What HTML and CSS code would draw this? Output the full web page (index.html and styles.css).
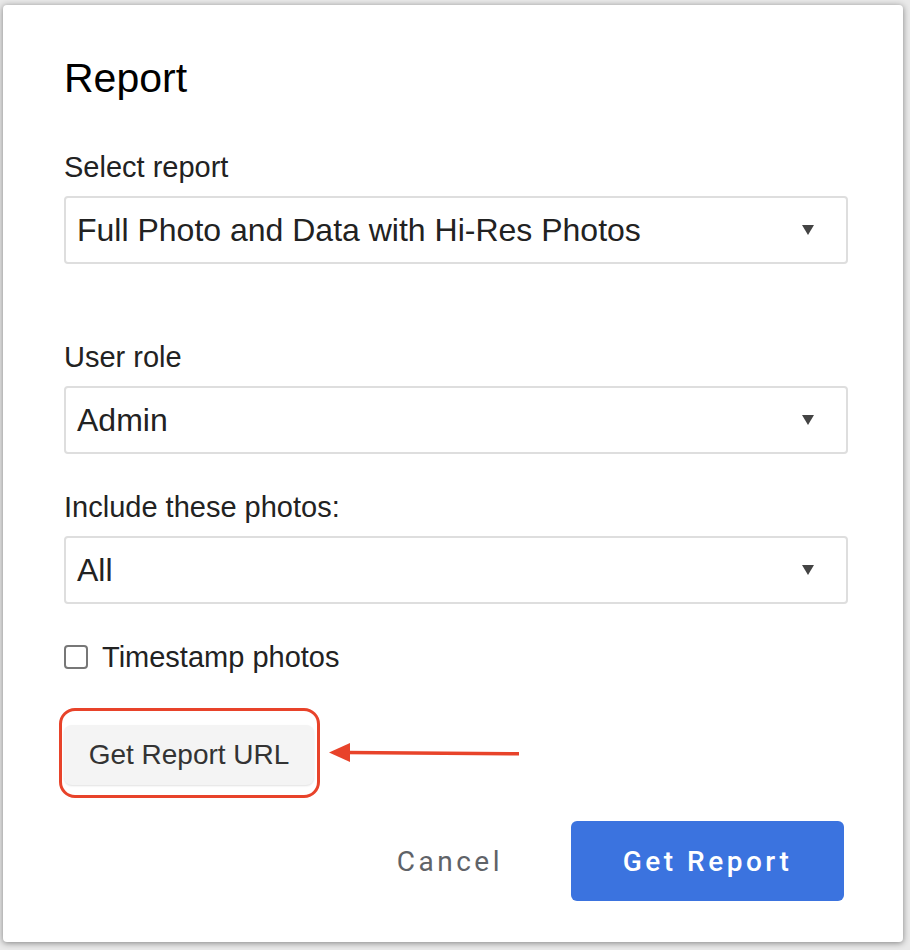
FILE: index.html
```
<!DOCTYPE html>
<html lang="en">
<head>
    <meta charset="UTF-8">
    <meta name="viewport" content="width=device-width, initial-scale=1.0">
    <link rel="stylesheet" href="styles.css">
    <title>Report</title>
</head>
<body>
    <div class="dialog">
        <h1 class="dialog-title">Report</h1>

        <div class="field field-report">
            <label class="field-label">Select report</label>
            <div class="select">
                <span class="select-value">Full Photo and Data with Hi-Res Photos</span>
                <svg class="select-arrow" width="12" height="10" viewBox="0 0 12 10"><path d="M0 0 L12 0 L6 10 Z" fill="#444"/></svg>
            </div>
        </div>

        <div class="field field-role">
            <label class="field-label">User role</label>
            <div class="select">
                <span class="select-value">Admin</span>
                <svg class="select-arrow" width="12" height="10" viewBox="0 0 12 10"><path d="M0 0 L12 0 L6 10 Z" fill="#444"/></svg>
            </div>
        </div>

        <div class="field field-photos">
            <label class="field-label">Include these photos:</label>
            <div class="select">
                <span class="select-value">All</span>
                <svg class="select-arrow" width="12" height="10" viewBox="0 0 12 10"><path d="M0 0 L12 0 L6 10 Z" fill="#444"/></svg>
            </div>
        </div>

        <label class="check-row">
            <span class="checkbox"></span>
            Timestamp photos
        </label>

        <div class="url-row">
            <div class="url-wrap">
                <button class="btn-url">Get Report URL</button>
                <!-- annotation drawn over the screenshot -->
                <span class="mark-box"></span>
                <svg class="mark-arrow" width="192" height="20" viewBox="0 0 192 20">
                    <line x1="17" y1="9.5" x2="190" y2="10.8" stroke="#e8432a" stroke-width="3.5"/>
                    <path d="M0 9.5 L21 0 L21 19 Z" fill="#e8432a"/>
                </svg>
            </div>
        </div>

        <div class="dialog-actions">
            <button class="btn-cancel">Cancel</button>
            <button class="btn-primary">Get Report</button>
        </div>
    </div>
</body>
</html>
```

FILE: styles.css
```
body {
    margin: 0;
    padding: 5px 7px 8px 3px;
    background-color: #e9e9e9;
    font-family: "Liberation Sans", Arial, sans-serif;
    color: #222;
}

.dialog {
    background-color: #fff;
    border-radius: 4px;
    box-shadow: 0 1px 6px rgba(0, 0, 0, 0.45);
    padding: 49px 55px 40px 61px;
    height: 937px;
    box-sizing: border-box;
}

.dialog-title {
    margin: 0;
    font-size: 41px;
    line-height: 48px;
    font-weight: normal;
    color: #000;
}

.field {
    display: flex;
    flex-direction: column;
}

.field-report {
    margin-top: 48px;
}

.field-role {
    margin-top: 76px;
}

.field-photos {
    margin-top: 36px;
}

.field-label {
    font-size: 29px;
    line-height: 34px;
    color: #222;
    margin-bottom: 12px;
}

.select {
    display: flex;
    align-items: center;
    justify-content: space-between;
    height: 68px;
    box-sizing: border-box;
    border: 2px solid #dedede;
    border-radius: 4px;
    padding: 0 32px 0 11px;
}

.select-value {
    font-size: 32px;
    color: #222;
}

.check-row {
    display: flex;
    align-items: center;
    gap: 14px;
    margin-top: 36px;
    font-size: 29px;
    line-height: 34px;
    color: #222;
}

.checkbox {
    width: 24px;
    height: 24px;
    box-sizing: border-box;
    border: 2px solid #777;
    border-radius: 4px;
}

.url-row {
    margin-top: 51px;
    display: flex;
}

.url-wrap {
    position: relative;
}

.btn-url {
    display: block;
    width: 250px;
    height: 60px;
    border: none;
    border-radius: 8px;
    background-color: #f4f4f4;
    box-shadow: 0 1px 2px rgba(0, 0, 0, 0.12);
    font-family: "Liberation Sans", Arial, sans-serif;
    font-size: 28px;
    color: #333;
}

.mark-box {
    position: absolute;
    top: -17px;
    left: -5px;
    right: -6px;
    bottom: -13px;
    border: 3px solid #e8432a;
    border-radius: 16px;
}

.mark-arrow {
    position: absolute;
    left: 265px;
    top: 18px;
}

.dialog-actions {
    display: flex;
    justify-content: flex-end;
    align-items: center;
    margin-top: 36px;
    padding-right: 4px;
}

.btn-cancel {
    background: none;
    border: none;
    font-family: Roboto, "Liberation Sans", sans-serif;
    font-size: 28px;
    letter-spacing: 3.5px;
    color: #5f6368;
    margin-right: 68px;
    padding: 0;
}

.btn-primary {
    width: 273px;
    height: 80px;
    border: none;
    border-radius: 6px;
    background-color: #3b73df;
    color: #fff;
    font-family: Roboto, "Liberation Sans", sans-serif;
    font-size: 28px;
    font-weight: 500;
    letter-spacing: 3.5px;
}
```
